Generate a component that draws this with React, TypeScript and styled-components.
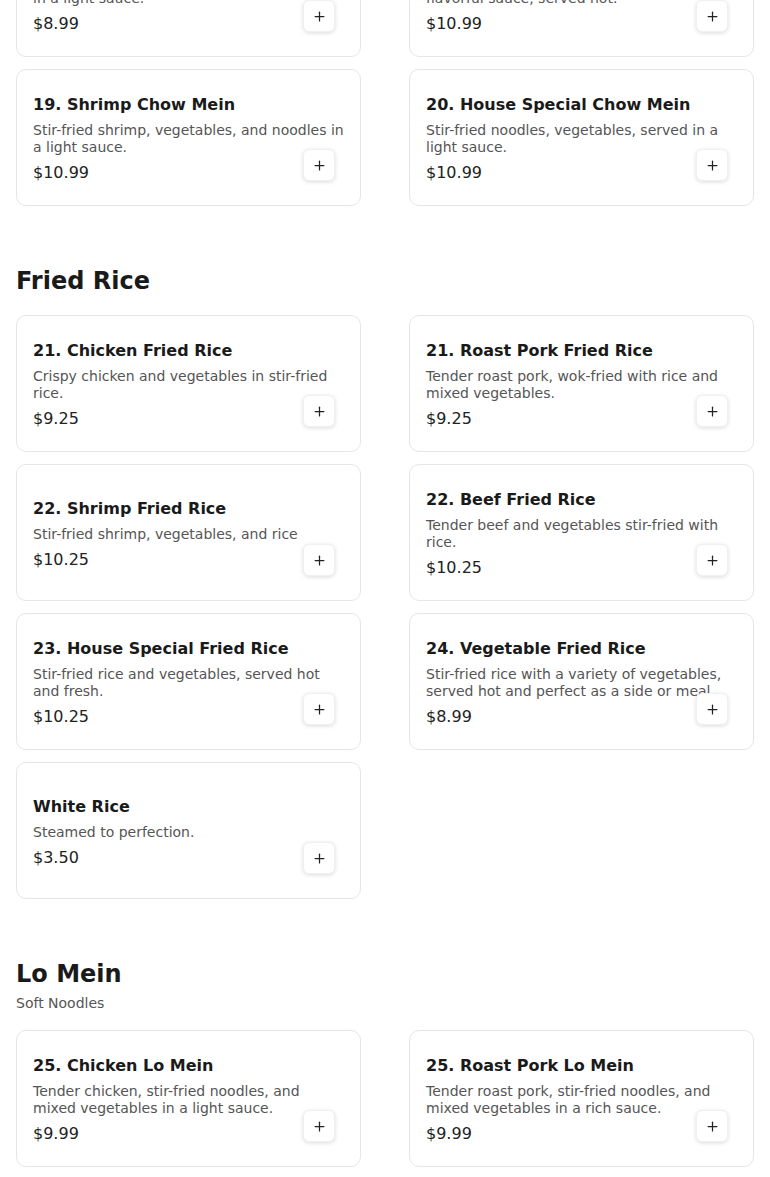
import styled, { createGlobalStyle } from "styled-components";
import { Plus } from "lucide-react";

const GlobalStyle = createGlobalStyle`
  html, body {
    margin: 0;
    padding: 0;
    background: #ffffff;
  }
  body {
    font-family: "DejaVu Sans", Verdana, sans-serif;
    color: #1a1a1a;
  }
  * {
    box-sizing: border-box;
  }
`

// page is scrolled down a bit, the chow mein section is mostly above the fold
const Page = styled.div`
  display: flex;
  flex-direction: column;
  gap: 61px;
  padding: 0 16px 40px;
  margin-top: -80px;
`

const Section = styled.section`
  display: flex;
  flex-direction: column;
`

const SectionTitle = styled.h2`
  margin: 0;
  font-size: 24px;
  line-height: 28px;
  font-weight: 700;
  color: #1a1a1a;
`

const SectionSub = styled.div`
  margin-top: 7px;
  font-size: 14px;
  line-height: 17px;
  color: #555555;
`

const Grid = styled.div<{ $gap: number }>`
  display: grid;
  grid-template-columns: 1fr 1fr;
  column-gap: 48px;
  row-gap: 12px;
  margin-top: ${(p) => p.$gap}px;
`

const Card = styled.div`
  position: relative;
  display: flex;
  flex-direction: column;
  justify-content: center;
  min-height: 137px;
  padding: 17px 16px 15px;
  background: #ffffff;
  border: 1px solid #e6e6e6;
  border-radius: 10px;
`

const ItemName = styled.div`
  font-size: 16px;
  line-height: 19px;
  font-weight: 700;
  color: #1a1a1a;
  margin-bottom: 8px;
`

const ItemDesc = styled.div`
  font-size: 14px;
  line-height: 17px;
  color: #555555;
  margin-bottom: 7px;
`

const ItemPrice = styled.div`
  font-size: 16px;
  line-height: 19px;
  color: #222222;
`

const AddButton = styled.button`
  position: absolute;
  right: 25px;
  bottom: 24px;
  width: 32px;
  height: 32px;
  padding: 0;
  display: flex;
  align-items: center;
  justify-content: center;
  background: #ffffff;
  border: 1px solid #f0f0f0;
  border-radius: 6px;
  box-shadow: 0 1px 4px rgba(0, 0, 0, 0.14);
  color: #222222;
  cursor: pointer;
`

type Item = { name: string; desc: string; price: string };
type Group = { title?: string; sub?: string; items: Item[] };

const groups: Group[] = [
  {
    items: [
      { name: "17. Chicken Chow Mein", desc: "Stir-fried chicken, vegetables, and noodles in a light sauce.", price: "$8.99" },
      { name: "18. Beef Chow Mein", desc: "Stir-fried beef, noodles, and vegetables in a flavorful sauce, served hot.", price: "$10.99" },
      { name: "19. Shrimp Chow Mein", desc: "Stir-fried shrimp, vegetables, and noodles in a light sauce.", price: "$10.99" },
      { name: "20. House Special Chow Mein", desc: "Stir-fried noodles, vegetables, served in a light sauce.", price: "$10.99" },
    ],
  },
  {
    title: "Fried Rice",
    items: [
      { name: "21. Chicken Fried Rice", desc: "Crispy chicken and vegetables in stir-fried rice.", price: "$9.25" },
      { name: "21. Roast Pork Fried Rice", desc: "Tender roast pork, wok-fried with rice and mixed vegetables.", price: "$9.25" },
      { name: "22. Shrimp Fried Rice", desc: "Stir-fried shrimp, vegetables, and rice", price: "$10.25" },
      { name: "22. Beef Fried Rice", desc: "Tender beef and vegetables stir-fried with rice.", price: "$10.25" },
      { name: "23. House Special Fried Rice", desc: "Stir-fried rice and vegetables, served hot and fresh.", price: "$10.25" },
      { name: "24. Vegetable Fried Rice", desc: "Stir-fried rice with a variety of vegetables, served hot and perfect as a side or meal.", price: "$8.99" },
      { name: "White Rice", desc: "Steamed to perfection.", price: "$3.50" },
    ],
  },
  {
    title: "Lo Mein",
    sub: "Soft Noodles",
    items: [
      { name: "25. Chicken Lo Mein", desc: "Tender chicken, stir-fried noodles, and mixed vegetables in a light sauce.", price: "$9.99" },
      { name: "25. Roast Pork Lo Mein", desc: "Tender roast pork, stir-fried noodles, and mixed vegetables in a rich sauce.", price: "$9.99" },
    ],
  },
];

function MenuCard({ item }: { item: Item }) {
  return (
    <Card>
      <ItemName>{item.name}</ItemName>
      <ItemDesc>{item.desc}</ItemDesc>
      <ItemPrice>{item.price}</ItemPrice>
      <AddButton aria-label={`Add ${item.name}`}>
        <Plus size={15} strokeWidth={2} />
      </AddButton>
    </Card>
  );
}

export default function App() {
  return (
    <>
      <GlobalStyle />
      <Page>
        {groups.map((g, i) => (
          <Section key={i}>
            {g.title && <SectionTitle>{g.title}</SectionTitle>}
            {g.sub && <SectionSub>{g.sub}</SectionSub>}
            <Grid $gap={g.sub ? 18 : g.title ? 20 : 0}>
              {g.items.map((item) => (
                <MenuCard key={item.name} item={item} />
              ))}
            </Grid>
          </Section>
        ))}
      </Page>
    </>
  );
}
